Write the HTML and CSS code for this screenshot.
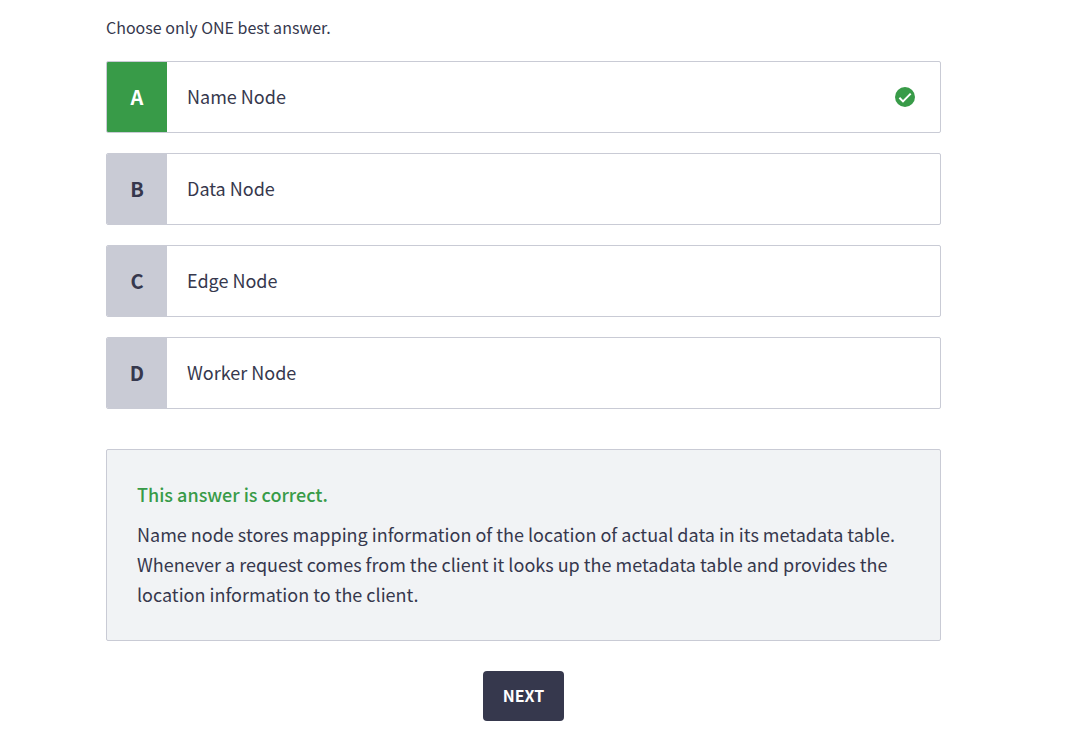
FILE: index.html
```html
<!DOCTYPE html>
<html lang="en">
<head>
<meta charset="utf-8">
<title>Quiz question</title>
<meta name="viewport" content="width=device-width, initial-scale=1">
<link rel="stylesheet" href="styles.css">
</head>
<body>
<main class="quiz">
  <p class="hint" id="hint">Choose only ONE best answer.</p>
  <div class="options" role="group" aria-labelledby="hint">
    <button type="button" class="option option-correct">
      <span class="letter">A</span>
      <span class="answer">Name Node</span>
      <svg class="check" viewBox="0 0 20 20" role="img" aria-label="Correct"><circle cx="10" cy="10" r="10" fill="#389b48"/><path d="M4.4 10.7l3.6 3.7 7.7-7.8" fill="none" stroke="#fff" stroke-width="2"/></svg>
    </button>
    <button type="button" class="option">
      <span class="letter">B</span>
      <span class="answer">Data Node</span>
    </button>
    <button type="button" class="option">
      <span class="letter">C</span>
      <span class="answer">Edge Node</span>
    </button>
    <button type="button" class="option">
      <span class="letter">D</span>
      <span class="answer">Worker Node</span>
    </button>
  </div>
  <section class="explanation">
    <h2 class="verdict">This answer is correct.</h2>
    <p class="reason">Name node stores mapping information of the location of actual data in its metadata table. Whenever a request comes from the client it looks up the metadata table and provides the location information to the client.</p>
  </section>
  <button type="button" class="next">NEXT</button>
</main>
</body>
</html>
```

FILE: styles.css
```css
* {
  box-sizing: border-box;
}

body {
  margin: 0;
  background: #fff;
  color: #36384d;
  font-family: "Source Sans Pro", "Noto Sans CJK SC", "Noto Sans", sans-serif;
  font-size: 18px;
  line-height: 30px;
}

button {
  font: inherit;
  color: inherit;
  cursor: pointer;
}

.quiz {
  display: flex;
  flex-direction: column;
  padding: 12px 135px 25px 106px;
}

.hint {
  margin: 0 0 19px;
  font-size: 16px;
}

.options {
  display: flex;
  flex-direction: column;
  gap: 20px;
}

.option {
  display: flex;
  align-items: stretch;
  width: 100%;
  padding: 0;
  overflow: hidden;
  border: 1px solid #c9cbd5;
  border-radius: 2px;
  background: #fff;
  text-align: left;
}

.letter {
  display: flex;
  flex: none;
  align-items: center;
  justify-content: center;
  width: 60px;
  background: #c9cbd5;
  font-size: 20px;
  font-weight: 700;
}

.option-correct .letter {
  background: #389b48;
  color: #fff;
}

.answer {
  flex: 1;
  padding: 19px 20px 21px;
}

.check {
  flex: none;
  align-self: center;
  width: 20px;
  height: 20px;
  margin-right: 25px;
}

.explanation {
  margin-top: 40px;
  padding: 29px 30px 31px;
  border: 1px solid #c9cbd5;
  border-radius: 2px;
  background: #f1f3f5;
}

.verdict {
  margin: 0 0 10px;
  color: #389b48;
  font-size: 18px;
  font-weight: 500;
}

.reason {
  margin: 0;
}

.next {
  align-self: center;
  margin-top: 30px;
  padding: 9px 20px 11px;
  border: 0;
  border-radius: 4px;
  background: #36384d;
  color: #fff;
  font-size: 16px;
  font-weight: 700;
}
```
